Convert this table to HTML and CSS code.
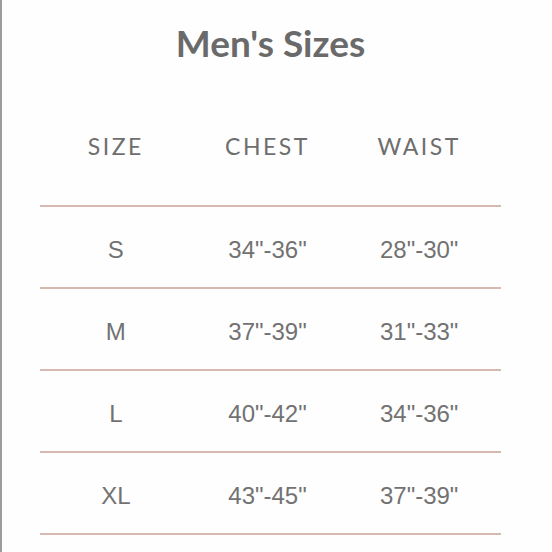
FILE: index.html
```html
<!DOCTYPE html>
<html>
<head>
<meta charset="utf-8">
<link rel="stylesheet" href="styles.css">
</head>
<body>
<div class="page">
  <h1 class="title">Men's Sizes</h1>
  <div class="table">
    <div class="row head">
      <div>SIZE</div><div>CHEST</div><div>WAIST</div>
    </div>
    <div class="row"><div>S</div><div>34"-36"</div><div>28"-30"</div></div>
    <div class="row"><div>M</div><div>37"-39"</div><div>31"-33"</div></div>
    <div class="row"><div>L</div><div>40"-42"</div><div>34"-36"</div></div>
    <div class="row"><div>XL</div><div>43"-45"</div><div>37"-39"</div></div>
  </div>
</div>
</body>
</html>
```
FILE: styles.css
```css
html, body {
  margin: 0;
  padding: 0;
  background: #fff;
}
.page {
  width: 550px;
  height: 552px;
  border-left: 2px solid #9c9c9c;
  background: #fefefe;
}
.title {
  margin: 0;
  padding-top: 22px;
  padding-left: 38px;
  width: 461px;
  text-align: center;
  font-family: Lato, "Open Sans", sans-serif;
  font-weight: 700;
  font-size: 37px;
  line-height: 42px;
  color: #6a6a6a;
}
.table {
  margin-left: 38px;
  width: 461px;
}
.row {
  display: grid;
  grid-template-columns: 1fr 1fr 1fr;
  padding-right: 6px;
  align-items: center;
  padding-top: 6px;
  box-sizing: content-box;
  height: 74px;
  border-bottom: 2px solid #d8b9b1;
  font-family: "Liberation Sans", Arial, sans-serif;
  font-size: 24px;
  color: #727272;
  text-align: center;
}
.row.head {
  height: 24px;
  padding-top: 70px;
  padding-bottom: 47px;
  align-items: center;
  font-family: Lato, "Open Sans", sans-serif;
  font-size: 23px;
  letter-spacing: 2.5px;
  line-height: 24px;
  color: #6e6e6e;
}
```
